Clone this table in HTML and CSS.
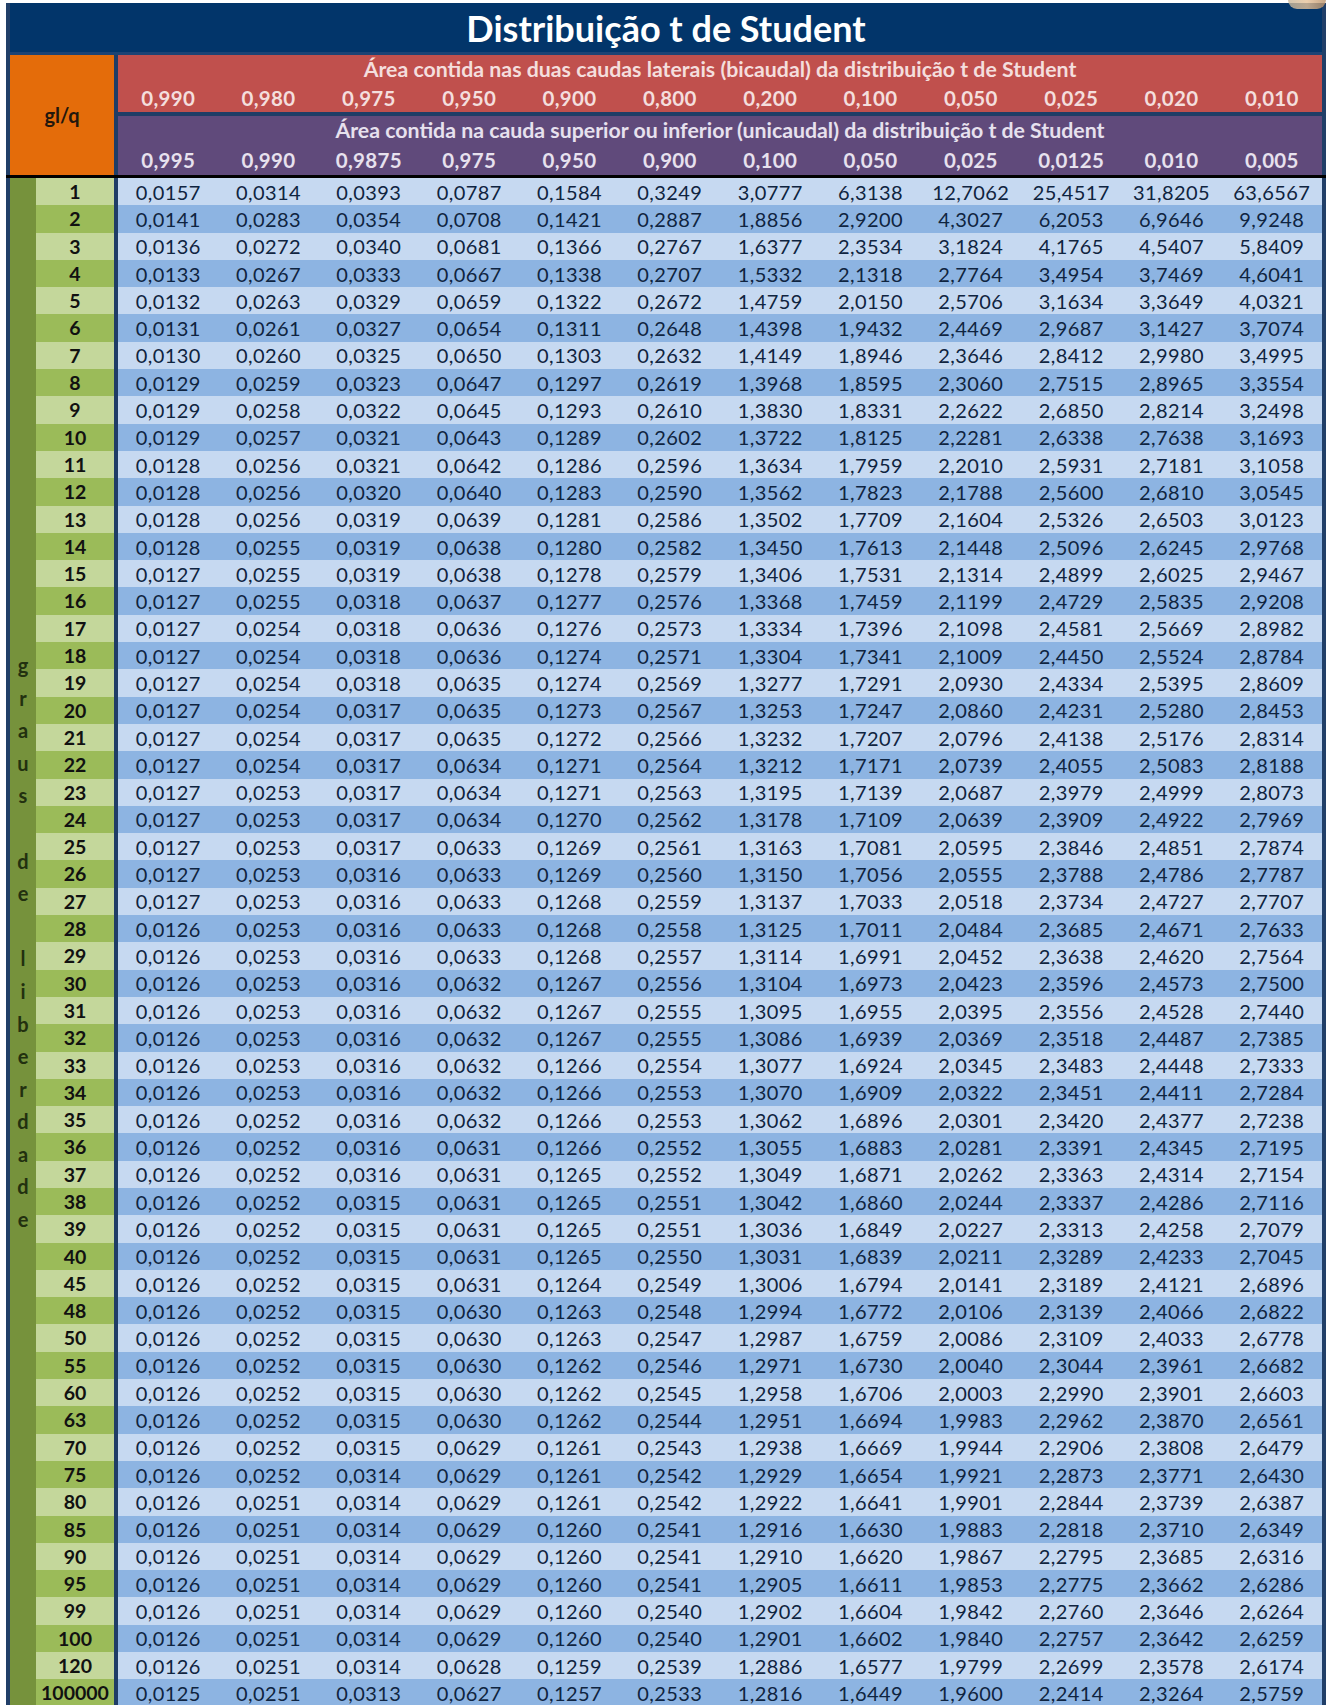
FILE: index.html
```html
<!DOCTYPE html>
<html lang="pt">
<head>
<meta charset="utf-8">
<title>Distribuição t de Student</title>
<link rel="stylesheet" href="styles.css">
</head>
<body>
<div class="corner-mark"></div>
<div class="sheet">
  <div class="title">Distribuição t de Student</div>
  <div class="head">
    <div class="glq">gl/q</div>
    <div class="vsep"></div>
    <div class="heads">
      <div class="band bi">
        <div class="cap">Área contida nas duas caudas laterais (bicaudal) da distribuição t de Student</div>
        <div class="vals"><span>0,990</span><span>0,980</span><span>0,975</span><span>0,950</span><span>0,900</span><span>0,800</span><span>0,200</span><span>0,100</span><span>0,050</span><span>0,025</span><span>0,020</span><span>0,010</span></div>
      </div>
      <div class="hsep"></div>
      <div class="band uni">
        <div class="cap">Área contida na cauda superior ou inferior (unicaudal) da distribuição t de Student</div>
        <div class="vals"><span>0,995</span><span>0,990</span><span>0,9875</span><span>0,975</span><span>0,950</span><span>0,900</span><span>0,100</span><span>0,050</span><span>0,025</span><span>0,0125</span><span>0,010</span><span>0,005</span></div>
      </div>
    </div>
  </div>
  <div class="rule"></div>
  <div class="body">
    <div class="strip">
      <div class="letters"><span>g</span><span>r</span><span>a</span><span>u</span><span>s</span><span>&nbsp;</span><span>d</span><span>e</span><span>&nbsp;</span><span>l</span><span>i</span><span>b</span><span>e</span><span>r</span><span>d</span><span>a</span><span>d</span><span>e</span></div>
    </div>
    <div class="gl">
      <div>1</div><div>2</div><div>3</div><div>4</div><div>5</div><div>6</div><div>7</div><div>8</div><div>9</div><div>10</div>
      <div>11</div><div>12</div><div>13</div><div>14</div><div>15</div><div>16</div><div>17</div><div>18</div><div>19</div><div>20</div>
      <div>21</div><div>22</div><div>23</div><div>24</div><div>25</div><div>26</div><div>27</div><div>28</div><div>29</div><div>30</div>
      <div>31</div><div>32</div><div>33</div><div>34</div><div>35</div><div>36</div><div>37</div><div>38</div><div>39</div><div>40</div>
      <div>45</div><div>48</div><div>50</div><div>55</div><div>60</div><div>63</div><div>70</div><div>75</div><div>80</div><div>85</div>
      <div>90</div><div>95</div><div>99</div><div>100</div><div>120</div><div>100000</div>
    </div>
    <div class="vsep"></div>
    <div class="data">
      <div class="row"><span>0,0157</span><span>0,0314</span><span>0,0393</span><span>0,0787</span><span>0,1584</span><span>0,3249</span><span>3,0777</span><span>6,3138</span><span>12,7062</span><span>25,4517</span><span>31,8205</span><span>63,6567</span></div>
      <div class="row"><span>0,0141</span><span>0,0283</span><span>0,0354</span><span>0,0708</span><span>0,1421</span><span>0,2887</span><span>1,8856</span><span>2,9200</span><span>4,3027</span><span>6,2053</span><span>6,9646</span><span>9,9248</span></div>
      <div class="row"><span>0,0136</span><span>0,0272</span><span>0,0340</span><span>0,0681</span><span>0,1366</span><span>0,2767</span><span>1,6377</span><span>2,3534</span><span>3,1824</span><span>4,1765</span><span>4,5407</span><span>5,8409</span></div>
      <div class="row"><span>0,0133</span><span>0,0267</span><span>0,0333</span><span>0,0667</span><span>0,1338</span><span>0,2707</span><span>1,5332</span><span>2,1318</span><span>2,7764</span><span>3,4954</span><span>3,7469</span><span>4,6041</span></div>
      <div class="row"><span>0,0132</span><span>0,0263</span><span>0,0329</span><span>0,0659</span><span>0,1322</span><span>0,2672</span><span>1,4759</span><span>2,0150</span><span>2,5706</span><span>3,1634</span><span>3,3649</span><span>4,0321</span></div>
      <div class="row"><span>0,0131</span><span>0,0261</span><span>0,0327</span><span>0,0654</span><span>0,1311</span><span>0,2648</span><span>1,4398</span><span>1,9432</span><span>2,4469</span><span>2,9687</span><span>3,1427</span><span>3,7074</span></div>
      <div class="row"><span>0,0130</span><span>0,0260</span><span>0,0325</span><span>0,0650</span><span>0,1303</span><span>0,2632</span><span>1,4149</span><span>1,8946</span><span>2,3646</span><span>2,8412</span><span>2,9980</span><span>3,4995</span></div>
      <div class="row"><span>0,0129</span><span>0,0259</span><span>0,0323</span><span>0,0647</span><span>0,1297</span><span>0,2619</span><span>1,3968</span><span>1,8595</span><span>2,3060</span><span>2,7515</span><span>2,8965</span><span>3,3554</span></div>
      <div class="row"><span>0,0129</span><span>0,0258</span><span>0,0322</span><span>0,0645</span><span>0,1293</span><span>0,2610</span><span>1,3830</span><span>1,8331</span><span>2,2622</span><span>2,6850</span><span>2,8214</span><span>3,2498</span></div>
      <div class="row"><span>0,0129</span><span>0,0257</span><span>0,0321</span><span>0,0643</span><span>0,1289</span><span>0,2602</span><span>1,3722</span><span>1,8125</span><span>2,2281</span><span>2,6338</span><span>2,7638</span><span>3,1693</span></div>
      <div class="row"><span>0,0128</span><span>0,0256</span><span>0,0321</span><span>0,0642</span><span>0,1286</span><span>0,2596</span><span>1,3634</span><span>1,7959</span><span>2,2010</span><span>2,5931</span><span>2,7181</span><span>3,1058</span></div>
      <div class="row"><span>0,0128</span><span>0,0256</span><span>0,0320</span><span>0,0640</span><span>0,1283</span><span>0,2590</span><span>1,3562</span><span>1,7823</span><span>2,1788</span><span>2,5600</span><span>2,6810</span><span>3,0545</span></div>
      <div class="row"><span>0,0128</span><span>0,0256</span><span>0,0319</span><span>0,0639</span><span>0,1281</span><span>0,2586</span><span>1,3502</span><span>1,7709</span><span>2,1604</span><span>2,5326</span><span>2,6503</span><span>3,0123</span></div>
      <div class="row"><span>0,0128</span><span>0,0255</span><span>0,0319</span><span>0,0638</span><span>0,1280</span><span>0,2582</span><span>1,3450</span><span>1,7613</span><span>2,1448</span><span>2,5096</span><span>2,6245</span><span>2,9768</span></div>
      <div class="row"><span>0,0127</span><span>0,0255</span><span>0,0319</span><span>0,0638</span><span>0,1278</span><span>0,2579</span><span>1,3406</span><span>1,7531</span><span>2,1314</span><span>2,4899</span><span>2,6025</span><span>2,9467</span></div>
      <div class="row"><span>0,0127</span><span>0,0255</span><span>0,0318</span><span>0,0637</span><span>0,1277</span><span>0,2576</span><span>1,3368</span><span>1,7459</span><span>2,1199</span><span>2,4729</span><span>2,5835</span><span>2,9208</span></div>
      <div class="row"><span>0,0127</span><span>0,0254</span><span>0,0318</span><span>0,0636</span><span>0,1276</span><span>0,2573</span><span>1,3334</span><span>1,7396</span><span>2,1098</span><span>2,4581</span><span>2,5669</span><span>2,8982</span></div>
      <div class="row"><span>0,0127</span><span>0,0254</span><span>0,0318</span><span>0,0636</span><span>0,1274</span><span>0,2571</span><span>1,3304</span><span>1,7341</span><span>2,1009</span><span>2,4450</span><span>2,5524</span><span>2,8784</span></div>
      <div class="row"><span>0,0127</span><span>0,0254</span><span>0,0318</span><span>0,0635</span><span>0,1274</span><span>0,2569</span><span>1,3277</span><span>1,7291</span><span>2,0930</span><span>2,4334</span><span>2,5395</span><span>2,8609</span></div>
      <div class="row"><span>0,0127</span><span>0,0254</span><span>0,0317</span><span>0,0635</span><span>0,1273</span><span>0,2567</span><span>1,3253</span><span>1,7247</span><span>2,0860</span><span>2,4231</span><span>2,5280</span><span>2,8453</span></div>
      <div class="row"><span>0,0127</span><span>0,0254</span><span>0,0317</span><span>0,0635</span><span>0,1272</span><span>0,2566</span><span>1,3232</span><span>1,7207</span><span>2,0796</span><span>2,4138</span><span>2,5176</span><span>2,8314</span></div>
      <div class="row"><span>0,0127</span><span>0,0254</span><span>0,0317</span><span>0,0634</span><span>0,1271</span><span>0,2564</span><span>1,3212</span><span>1,7171</span><span>2,0739</span><span>2,4055</span><span>2,5083</span><span>2,8188</span></div>
      <div class="row"><span>0,0127</span><span>0,0253</span><span>0,0317</span><span>0,0634</span><span>0,1271</span><span>0,2563</span><span>1,3195</span><span>1,7139</span><span>2,0687</span><span>2,3979</span><span>2,4999</span><span>2,8073</span></div>
      <div class="row"><span>0,0127</span><span>0,0253</span><span>0,0317</span><span>0,0634</span><span>0,1270</span><span>0,2562</span><span>1,3178</span><span>1,7109</span><span>2,0639</span><span>2,3909</span><span>2,4922</span><span>2,7969</span></div>
      <div class="row"><span>0,0127</span><span>0,0253</span><span>0,0317</span><span>0,0633</span><span>0,1269</span><span>0,2561</span><span>1,3163</span><span>1,7081</span><span>2,0595</span><span>2,3846</span><span>2,4851</span><span>2,7874</span></div>
      <div class="row"><span>0,0127</span><span>0,0253</span><span>0,0316</span><span>0,0633</span><span>0,1269</span><span>0,2560</span><span>1,3150</span><span>1,7056</span><span>2,0555</span><span>2,3788</span><span>2,4786</span><span>2,7787</span></div>
      <div class="row"><span>0,0127</span><span>0,0253</span><span>0,0316</span><span>0,0633</span><span>0,1268</span><span>0,2559</span><span>1,3137</span><span>1,7033</span><span>2,0518</span><span>2,3734</span><span>2,4727</span><span>2,7707</span></div>
      <div class="row"><span>0,0126</span><span>0,0253</span><span>0,0316</span><span>0,0633</span><span>0,1268</span><span>0,2558</span><span>1,3125</span><span>1,7011</span><span>2,0484</span><span>2,3685</span><span>2,4671</span><span>2,7633</span></div>
      <div class="row"><span>0,0126</span><span>0,0253</span><span>0,0316</span><span>0,0633</span><span>0,1268</span><span>0,2557</span><span>1,3114</span><span>1,6991</span><span>2,0452</span><span>2,3638</span><span>2,4620</span><span>2,7564</span></div>
      <div class="row"><span>0,0126</span><span>0,0253</span><span>0,0316</span><span>0,0632</span><span>0,1267</span><span>0,2556</span><span>1,3104</span><span>1,6973</span><span>2,0423</span><span>2,3596</span><span>2,4573</span><span>2,7500</span></div>
      <div class="row"><span>0,0126</span><span>0,0253</span><span>0,0316</span><span>0,0632</span><span>0,1267</span><span>0,2555</span><span>1,3095</span><span>1,6955</span><span>2,0395</span><span>2,3556</span><span>2,4528</span><span>2,7440</span></div>
      <div class="row"><span>0,0126</span><span>0,0253</span><span>0,0316</span><span>0,0632</span><span>0,1267</span><span>0,2555</span><span>1,3086</span><span>1,6939</span><span>2,0369</span><span>2,3518</span><span>2,4487</span><span>2,7385</span></div>
      <div class="row"><span>0,0126</span><span>0,0253</span><span>0,0316</span><span>0,0632</span><span>0,1266</span><span>0,2554</span><span>1,3077</span><span>1,6924</span><span>2,0345</span><span>2,3483</span><span>2,4448</span><span>2,7333</span></div>
      <div class="row"><span>0,0126</span><span>0,0253</span><span>0,0316</span><span>0,0632</span><span>0,1266</span><span>0,2553</span><span>1,3070</span><span>1,6909</span><span>2,0322</span><span>2,3451</span><span>2,4411</span><span>2,7284</span></div>
      <div class="row"><span>0,0126</span><span>0,0252</span><span>0,0316</span><span>0,0632</span><span>0,1266</span><span>0,2553</span><span>1,3062</span><span>1,6896</span><span>2,0301</span><span>2,3420</span><span>2,4377</span><span>2,7238</span></div>
      <div class="row"><span>0,0126</span><span>0,0252</span><span>0,0316</span><span>0,0631</span><span>0,1266</span><span>0,2552</span><span>1,3055</span><span>1,6883</span><span>2,0281</span><span>2,3391</span><span>2,4345</span><span>2,7195</span></div>
      <div class="row"><span>0,0126</span><span>0,0252</span><span>0,0316</span><span>0,0631</span><span>0,1265</span><span>0,2552</span><span>1,3049</span><span>1,6871</span><span>2,0262</span><span>2,3363</span><span>2,4314</span><span>2,7154</span></div>
      <div class="row"><span>0,0126</span><span>0,0252</span><span>0,0315</span><span>0,0631</span><span>0,1265</span><span>0,2551</span><span>1,3042</span><span>1,6860</span><span>2,0244</span><span>2,3337</span><span>2,4286</span><span>2,7116</span></div>
      <div class="row"><span>0,0126</span><span>0,0252</span><span>0,0315</span><span>0,0631</span><span>0,1265</span><span>0,2551</span><span>1,3036</span><span>1,6849</span><span>2,0227</span><span>2,3313</span><span>2,4258</span><span>2,7079</span></div>
      <div class="row"><span>0,0126</span><span>0,0252</span><span>0,0315</span><span>0,0631</span><span>0,1265</span><span>0,2550</span><span>1,3031</span><span>1,6839</span><span>2,0211</span><span>2,3289</span><span>2,4233</span><span>2,7045</span></div>
      <div class="row"><span>0,0126</span><span>0,0252</span><span>0,0315</span><span>0,0631</span><span>0,1264</span><span>0,2549</span><span>1,3006</span><span>1,6794</span><span>2,0141</span><span>2,3189</span><span>2,4121</span><span>2,6896</span></div>
      <div class="row"><span>0,0126</span><span>0,0252</span><span>0,0315</span><span>0,0630</span><span>0,1263</span><span>0,2548</span><span>1,2994</span><span>1,6772</span><span>2,0106</span><span>2,3139</span><span>2,4066</span><span>2,6822</span></div>
      <div class="row"><span>0,0126</span><span>0,0252</span><span>0,0315</span><span>0,0630</span><span>0,1263</span><span>0,2547</span><span>1,2987</span><span>1,6759</span><span>2,0086</span><span>2,3109</span><span>2,4033</span><span>2,6778</span></div>
      <div class="row"><span>0,0126</span><span>0,0252</span><span>0,0315</span><span>0,0630</span><span>0,1262</span><span>0,2546</span><span>1,2971</span><span>1,6730</span><span>2,0040</span><span>2,3044</span><span>2,3961</span><span>2,6682</span></div>
      <div class="row"><span>0,0126</span><span>0,0252</span><span>0,0315</span><span>0,0630</span><span>0,1262</span><span>0,2545</span><span>1,2958</span><span>1,6706</span><span>2,0003</span><span>2,2990</span><span>2,3901</span><span>2,6603</span></div>
      <div class="row"><span>0,0126</span><span>0,0252</span><span>0,0315</span><span>0,0630</span><span>0,1262</span><span>0,2544</span><span>1,2951</span><span>1,6694</span><span>1,9983</span><span>2,2962</span><span>2,3870</span><span>2,6561</span></div>
      <div class="row"><span>0,0126</span><span>0,0252</span><span>0,0315</span><span>0,0629</span><span>0,1261</span><span>0,2543</span><span>1,2938</span><span>1,6669</span><span>1,9944</span><span>2,2906</span><span>2,3808</span><span>2,6479</span></div>
      <div class="row"><span>0,0126</span><span>0,0252</span><span>0,0314</span><span>0,0629</span><span>0,1261</span><span>0,2542</span><span>1,2929</span><span>1,6654</span><span>1,9921</span><span>2,2873</span><span>2,3771</span><span>2,6430</span></div>
      <div class="row"><span>0,0126</span><span>0,0251</span><span>0,0314</span><span>0,0629</span><span>0,1261</span><span>0,2542</span><span>1,2922</span><span>1,6641</span><span>1,9901</span><span>2,2844</span><span>2,3739</span><span>2,6387</span></div>
      <div class="row"><span>0,0126</span><span>0,0251</span><span>0,0314</span><span>0,0629</span><span>0,1260</span><span>0,2541</span><span>1,2916</span><span>1,6630</span><span>1,9883</span><span>2,2818</span><span>2,3710</span><span>2,6349</span></div>
      <div class="row"><span>0,0126</span><span>0,0251</span><span>0,0314</span><span>0,0629</span><span>0,1260</span><span>0,2541</span><span>1,2910</span><span>1,6620</span><span>1,9867</span><span>2,2795</span><span>2,3685</span><span>2,6316</span></div>
      <div class="row"><span>0,0126</span><span>0,0251</span><span>0,0314</span><span>0,0629</span><span>0,1260</span><span>0,2541</span><span>1,2905</span><span>1,6611</span><span>1,9853</span><span>2,2775</span><span>2,3662</span><span>2,6286</span></div>
      <div class="row"><span>0,0126</span><span>0,0251</span><span>0,0314</span><span>0,0629</span><span>0,1260</span><span>0,2540</span><span>1,2902</span><span>1,6604</span><span>1,9842</span><span>2,2760</span><span>2,3646</span><span>2,6264</span></div>
      <div class="row"><span>0,0126</span><span>0,0251</span><span>0,0314</span><span>0,0629</span><span>0,1260</span><span>0,2540</span><span>1,2901</span><span>1,6602</span><span>1,9840</span><span>2,2757</span><span>2,3642</span><span>2,6259</span></div>
      <div class="row"><span>0,0126</span><span>0,0251</span><span>0,0314</span><span>0,0628</span><span>0,1259</span><span>0,2539</span><span>1,2886</span><span>1,6577</span><span>1,9799</span><span>2,2699</span><span>2,3578</span><span>2,6174</span></div>
      <div class="row"><span>0,0125</span><span>0,0251</span><span>0,0313</span><span>0,0627</span><span>0,1257</span><span>0,2533</span><span>1,2816</span><span>1,6449</span><span>1,9600</span><span>2,2414</span><span>2,3264</span><span>2,5759</span></div>
    </div>
  </div>
</div>
</body>
</html>
```

FILE: styles.css
```css
html, body {
  margin: 0;
  padding: 0;
}

body {
  background: #ffffff;
  font-family: Lato, "Liberation Sans", sans-serif;
  height: 1705px;
  overflow: hidden;
  position: relative;
}

.corner-mark {
  position: absolute;
  top: 0;
  right: 2px;
  width: 38px;
  height: 9px;
  border-radius: 0 0 10px 10px;
  background: linear-gradient(90deg, #c9b89c, #e8c39a 50%, #b98f66);
  opacity: 0.8;
  z-index: 2;
}

.sheet {
  margin: 3px 0 0 6px;
  width: 1312px;
  border-left: 4px solid #213f68;
  border-right: 4px solid #213f68;
  background: #213f68;
}

.title {
  height: 49px;
  line-height: 50px;
  background: #02356a;
  border-bottom: 3px solid #1c4374;
  color: #ffffff;
  font-weight: 700;
  font-size: 36px;
  text-align: center;
}

.head {
  display: flex;
  height: 120px;
}

.glq {
  width: 104px;
  background: #e46c0a;
  color: #23170d;
  font-weight: 700;
  font-size: 20px;
  display: flex;
  align-items: center;
  justify-content: center;
}

.vsep {
  width: 4px;
  flex: none;
  background: #1f3d66;
}

.heads {
  flex: 1;
  display: flex;
  flex-direction: column;
}

.hsep {
  height: 4px;
  background: #1f3d66;
}

.band {
  display: flex;
  flex-direction: column;
  font-weight: 700;
}

.band.bi {
  height: 57px;
  background: #c0504d;
  color: #f4dedd;
}

.band.uni {
  height: 59px;
  background: #604a7b;
  color: #e7e1ee;
}

.cap {
  height: 28px;
  line-height: 28px;
  text-align: center;
  font-size: 21.3px;
}

.band.uni .cap {
  height: 29px;
  line-height: 29px;
}

.vals {
  flex: 1;
  display: grid;
  grid-template-columns: repeat(12, 1fr);
  align-items: center;
  text-align: center;
  font-size: 20.5px;
  letter-spacing: 0.3px;
}

.rule {
  height: 3px;
  margin: 0 -4px;
  background: #000000;
}

.body {
  display: flex;
}

.strip {
  width: 26px;
  flex: none;
  background: #76923c;
  display: flex;
  align-items: center;
  justify-content: center;
}

.letters {
  display: flex;
  flex-direction: column;
  align-items: center;
  font-weight: 700;
  font-size: 20px;
  line-height: 32.6px;
  color: #22300f;
}

.gl {
  width: 78px;
  flex: none;
}

.gl > div {
  height: 27.3px;
  line-height: 27.3px;
  text-align: center;
  font-weight: 700;
  font-size: 19.5px;
  color: #111111;
  background: #c4d79b;
}

.gl > div:nth-child(even) {
  background: #9bbb59;
}

.data {
  flex: 1;
}

.row {
  height: 27.3px;
  display: grid;
  grid-template-columns: repeat(12, 1fr);
  align-items: center;
  text-align: center;
  font-size: 20px;
  letter-spacing: 0.4px;
  color: #0f2440;
  background: #c6d9f1;
}

.row:nth-child(even) {
  background: #8db4e2;
}
```
